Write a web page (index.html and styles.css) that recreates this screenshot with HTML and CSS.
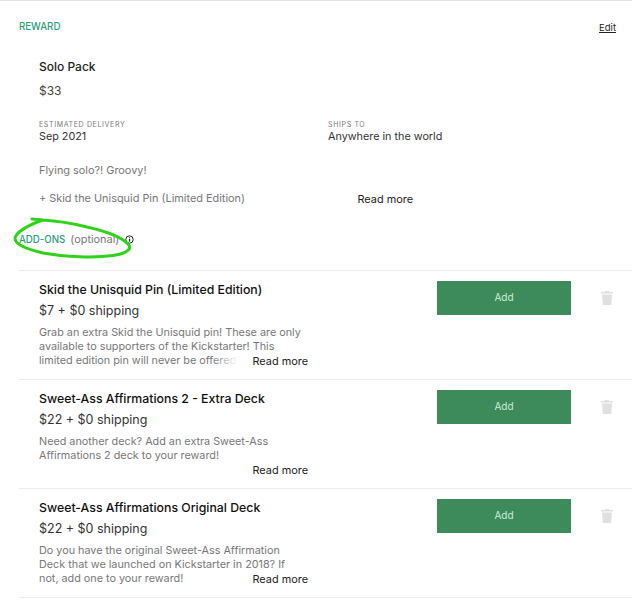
FILE: index.html
```html
<!DOCTYPE html>
<html lang="en">
<head>
  <meta charset="UTF-8">
  <meta name="viewport" content="width=device-width, initial-scale=1.0">
  <title>Reward</title>
  <link rel="stylesheet" href="styles.css">
</head>
<body>
  <div class="page">
    <div class="reward-head">
      <span class="section-label">REWARD</span>
      <a class="edit-link" href="#">Edit</a>
    </div>

    <div class="reward">
      <h2 class="reward-title">Solo Pack</h2>
      <p class="reward-price">$33</p>
      <div class="reward-meta">
        <div class="meta-col">
          <span class="meta-label">ESTIMATED DELIVERY</span>
          <span class="meta-value">Sep 2021</span>
        </div>
        <div class="meta-col">
          <span class="meta-label">SHIPS TO</span>
          <span class="meta-value">Anywhere in the world</span>
        </div>
      </div>
      <div class="reward-desc">
        <p>Flying solo?! Groovy!</p>
        <p class="reward-includes">+ Skid the Unisquid Pin (Limited Edition)</p>
        <a class="read-more" href="#">Read more</a>
      </div>
    </div>

    <div class="addons-head">
      <span class="section-label">ADD-ONS</span>
      <span class="optional">(optional)</span>
      <svg class="info-icon" width="9" height="9" viewBox="0 0 9 9">
        <circle cx="4.5" cy="4.5" r="3.7" fill="none" stroke="#222" stroke-width="1"/>
        <path d="M4.5 2.3v.9M4.5 3.900v2.800" stroke="#222" stroke-width="1.200"/>
      </svg>
      <!-- marker scribble drawn over the heading -->
      <svg class="scribble" width="124" height="48" viewBox="0 0 124 48">
        <path d="M22 7L33 8C50 9 65 12 77 15C95 19 112 25 119 33C122 39 113 42 103 43.500C85 46 55 45 33 41C20 38 6 33 5 27C4.500 21 18 13 33 8" fill="none" stroke="#2fd31c" stroke-width="3" stroke-linecap="round"/>
      </svg>
    </div>

    <div class="addon">
      <div class="addon-info">
        <h3 class="addon-title">Skid the Unisquid Pin (Limited Edition)</h3>
        <p class="addon-price">$7 + $0 shipping</p>
        <div class="addon-desc">
          <p>Grab an extra Skid the Unisquid pin! These are only available to supporters of the Kickstarter! This limited edition pin will never be offered</p>
          <span class="fade"></span>
          <a class="read-more" href="#">Read more</a>
        </div>
      </div>
      <button class="add-btn">Add</button>
      <svg class="trash" width="12" height="14" viewBox="0 0 12 14"><path d="M4 0h4l.6 1H12v1.500H0V1h3.400zM1 3.500h10L10.200 14H1.800z" fill="#e0e0e0"/></svg>
    </div>

    <div class="addon">
      <div class="addon-info">
        <h3 class="addon-title">Sweet-Ass Affirmations 2 - Extra Deck</h3>
        <p class="addon-price">$22 + $0 shipping</p>
        <div class="addon-desc">
          <p>Need another deck? Add an extra Sweet-Ass Affirmations 2 deck to your reward!</p>
          <a class="read-more" href="#">Read more</a>
        </div>
      </div>
      <button class="add-btn">Add</button>
      <svg class="trash" width="12" height="14" viewBox="0 0 12 14"><path d="M4 0h4l.6 1H12v1.500H0V1h3.400zM1 3.500h10L10.200 14H1.800z" fill="#e0e0e0"/></svg>
    </div>

    <div class="addon">
      <div class="addon-info">
        <h3 class="addon-title">Sweet-Ass Affirmations Original Deck</h3>
        <p class="addon-price">$22 + $0 shipping</p>
        <div class="addon-desc">
          <p>Do you have the original Sweet-Ass Affirmation Deck that we launched on Kickstarter in 2018? If not, add one to your reward!</p>
          <a class="read-more" href="#">Read more</a>
        </div>
      </div>
      <button class="add-btn">Add</button>
      <svg class="trash" width="12" height="14" viewBox="0 0 12 14"><path d="M4 0h4l.6 1H12v1.500H0V1h3.400zM1 3.500h10L10.200 14H1.800z" fill="#e0e0e0"/></svg>
    </div>
    <div class="list-end"></div>
  </div>
</body>
</html>
```

FILE: styles.css
```css
* {
  margin: 0;
  padding: 0;
  box-sizing: border-box;
}

body {
  font-family: Inter, "Noto Sans", sans-serif;
  background: white;
  color: #222;
  overflow: hidden;
}

.page {
  border-top: 1px solid #e2e2e2;
  padding-left: 19px;
  height: 603px;
  overflow: hidden;
}

.reward-head {
  display: flex;
  justify-content: space-between;
  align-items: center;
  padding: 16px 16px 0 0;
  height: 35px;
}

.section-label {
  font-size: 9.7px;
  font-weight: 500;
  color: #2f9e79;
}

.edit-link {
  margin-top: 2px;
  font-size: 9.5px;
  color: #222;
  text-decoration: underline;
}

.reward {
  padding: 23px 0 0 20px;
}

.reward-title {
  font-size: 12px;
  font-weight: 500;
  line-height: 16px;
  color: #222;
}

.reward-price {
  margin-top: 8px;
  font-size: 12px;
  line-height: 16px;
  color: #444;
}

.reward-meta {
  display: flex;
  margin-top: 21px;
}

.meta-col {
  width: 289px;
  display: flex;
  flex-direction: column;
}

.meta-label {
  font-size: 7px;
  line-height: 10px;
  letter-spacing: 0.65px;
  color: #777;
}

.meta-value {
  font-size: 10.8px;
  line-height: 14px;
  color: #333;
}

.reward-desc {
  position: relative;
  width: 374px;
  margin-top: 19px;
  font-size: 10.9px;
  line-height: 14px;
  color: #777;
}

.reward-includes {
  margin-top: 14px;
}

.read-more {
  position: absolute;
  right: 0;
  bottom: -1px;
  font-size: 10.9px;
  line-height: 14px;
  color: #222;
  text-decoration: none;
}

.addons-head {
  position: relative;
  display: flex;
  align-items: center;
  gap: 5px;
  margin-top: 27px;
  height: 14px;
}

.optional {
  font-size: 10.9px;
  color: #777;
}

.info-icon {
  margin-left: 1px;
}

.scribble {
  position: absolute;
  left: -9px;
  top: -20px;
}

.addon {
  display: flex;
  align-items: flex-start;
  height: 109px;
  padding: 10px 0 0 20px;
  border-top: 1px solid #ececec;
}

.addons-head + .addon {
  margin-top: 24px;
}

.list-end {
  border-top: 1px solid #ececec;
}

.addon-info {
  width: 269px;
}

.addon-title {
  margin-top: 1px;
  font-size: 12.3px;
  font-weight: 500;
  line-height: 16px;
  color: #111;
}

.addon-price {
  margin-top: 5px;
  font-size: 12.5px;
  line-height: 16px;
  color: #333;
}

.addon-desc {
  position: relative;
  margin-top: 7px;
  font-size: 10.8px;
  line-height: 14px;
  color: #777;
  height: 42px;
}

.addon-desc p {
  width: 265px;
}

.addon-desc .read-more {
  bottom: 0;
}

.fade {
  position: absolute;
  right: 66px;
  bottom: 0;
  width: 30px;
  height: 14px;
  background: linear-gradient(to right, rgba(255,255,255,0), white 85%);
}

.add-btn {
  width: 134px;
  height: 34px;
  margin-left: 129px;
  padding-bottom: 2px;
  background: #3d8b5a;
  color: #c9f0d8;
  border: none;
  font-family: inherit;
  font-size: 10px;
}

.trash {
  margin: 10px 0 0 30px;
}
```
